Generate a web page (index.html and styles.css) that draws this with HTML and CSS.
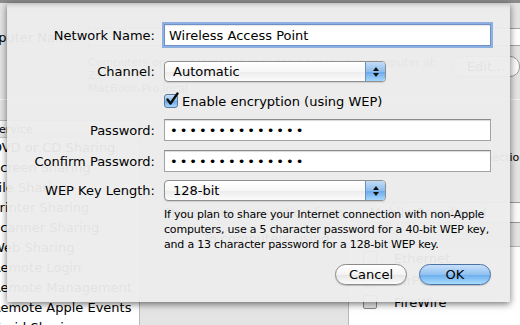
FILE: index.html
```html
<!DOCTYPE html>
<html lang="en">
<head>
    <meta charset="UTF-8">
    <title>Sharing - Wireless Access Point</title>
    <link rel="stylesheet" href="styles.css">
</head>
<body>
    <div class="window">
        <div class="toolbar-edge"></div>

        <div class="computer-name">
            <div class="name-row">
                <span class="name-label">Computer Name:</span>
                <span class="name-field"></span>
            </div>
            <div class="address-row">
                <p class="address">Computers on your local network can access your computer at: Zs-<br>MacBook-Pro.local</p>
                <span class="edit-btn">Edit…</span>
            </div>
        </div>
        <div class="separator"></div>

        <div class="panes">
            <div class="services">
                <div class="services-head">Service</div>
                <ul class="service-list">
                    <li>DVD or CD Sharing</li>
                    <li>Screen Sharing</li>
                    <li>File Sharing</li>
                    <li>Printer Sharing</li>
                    <li>Scanner Sharing</li>
                    <li>Web Sharing</li>
                    <li>Remote Login</li>
                    <li>Remote Management</li>
                    <li>Remote Apple Events</li>
                    <li>Xgrid Sharing</li>
                </ul>
            </div>
            <div class="detail">
                <p class="status">Internet Sharing: Off</p>
                <p class="desc">Internet Sharing allows other computers to share your connection to the</p>
                <div class="share-row">
                    <span>Share your connection from:</span>
                    <span class="ghost-popup">Mobile Broadband</span>
                </div>
                <p class="to-label">To computers using:</p>
                <ul class="ports">
                    <li><span class="port-box"></span>Ethernet</li>
                    <li><span class="port-box"></span>AirPort</li>
                    <li><span class="port-box"></span>FireWire</li>
                </ul>
            </div>
        </div>

        <!-- the sheet drops down over the preferences window -->
        <form class="sheet" onsubmit="return false;">
            <div class="row row-name">
                <label class="label" for="networkName">Network Name:</label>
                <input class="field focused" type="text" id="networkName" value="Wireless Access Point">
            </div>
            <div class="row row-channel">
                <label class="label" for="channel">Channel:</label>
                <div class="popup" id="channel">
                    <span class="popup-value">Automatic</span>
                    <span class="popup-arrows">
                        <svg width="8" height="12" viewBox="0 0 8 12"><path d="M4 1 L7 5 L1 5 Z M4 11 L7 7 L1 7 Z" fill="#111"/></svg>
                    </span>
                </div>
            </div>
            <div class="row row-check">
                <span class="label"></span>
                <label class="check">
                    <span class="checkbox">
                        <svg width="16" height="16" viewBox="0 0 16 16"><path d="M3.5 7.5 L6.5 11.5 L13.5 1.5" fill="none" stroke="#0d0d0d" stroke-width="2.4" stroke-linecap="round" stroke-linejoin="round"/></svg>
                    </span>
                    Enable encryption (using WEP)
                </label>
            </div>
            <div class="row row-pass">
                <label class="label" for="password">Password:</label>
                <input class="field dots" type="password" id="password" value="aaaaaaaaaaaaaa">
            </div>
            <div class="row row-confirm">
                <label class="label" for="confirm">Confirm Password:</label>
                <input class="field dots" type="password" id="confirm" value="aaaaaaaaaaaaaa">
            </div>
            <div class="row row-key">
                <label class="label" for="keyLength">WEP Key Length:</label>
                <div class="popup" id="keyLength">
                    <span class="popup-value">128-bit</span>
                    <span class="popup-arrows">
                        <svg width="8" height="12" viewBox="0 0 8 12"><path d="M4 1 L7 5 L1 5 Z M4 11 L7 7 L1 7 Z" fill="#111"/></svg>
                    </span>
                </div>
            </div>
            <p class="help">If you plan to share your Internet connection with non-Apple<br>computers, use a 5 character password for a 40-bit WEP key,<br>and a 13 character password for a 128-bit WEP key.</p>
            <div class="buttons">
                <button type="button" class="btn">Cancel</button>
                <button type="submit" class="btn btn-default">OK</button>
            </div>
        </form>
    </div>
</body>
</html>
```

FILE: styles.css
```css
* {
    box-sizing: border-box;
}
body {
    margin: 0;
    font-family: "DejaVu Sans", "Liberation Sans", sans-serif;
    font-size: 13px;
    color: #000;
}
p, ul {
    margin: 0;
    padding: 0;
    list-style: none;
}
.window {
    position: relative;
    width: 520px;
    height: 325px;
    overflow: hidden;
    background: #e4e4e4;
}
.toolbar-edge {
    height: 3px;
    background: #8c8c8c;
}

/* background window: computer name area */
.computer-name {
    height: 96px;
    padding-top: 25px;
}
.name-row {
    display: flex;
    align-items: center;
    height: 18px;
}
.name-label {
    margin-left: -45px;
    width: 125px;
    text-align: right;
    white-space: nowrap;
}
.name-field {
    flex: 1;
    margin-left: 8px;
    margin-right: -30px;
    height: 18px;
    background: #fff;
    border: 1px solid #a5a5a5;
}
.address-row {
    display: flex;
    align-items: flex-start;
    margin-top: 10px;
    padding-left: 88px;
}
.address {
    font-size: 11px;
    line-height: 13px;
    color: #333;
    width: 360px;
}
.edit-btn {
    margin-left: 6px;
    padding: 2px 14px;
    border: 1px solid #9a9a9a;
    border-radius: 10px;
    background: #fafafa;
}
.separator {
    height: 1px;
    background: #c4c4c4;
    border-bottom: 1px solid #f4f4f4;
}

/* background window: services and detail */
.panes {
    display: flex;
    margin-top: 20px;
}
.services {
    width: 148px;
    flex: none;
    margin-left: -8px;
    background: #fff;
    border-right: 1px solid #b8b8b8;
}
.services-head {
    height: 18px;
    line-height: 18px;
    font-size: 11px;
    border-top: 1px solid #b8b8b8;
    border-bottom: 1px solid #c8c8c8;
    background: linear-gradient(#fbfbfb, #e4e4e4);
}
.service-list li {
    height: 20px;
    line-height: 20px;
    white-space: nowrap;
}
.detail {
    flex: 1;
    padding-left: 23px;
}
.status {
    margin-top: 4px;
    font-weight: bold;
}
.desc {
    margin-top: 12px;
    font-size: 11px;
    white-space: nowrap;
}
.share-row {
    display: flex;
    align-items: center;
    margin-top: 38px;
    gap: 10px;
}
.ghost-popup {
    width: 165px;
    padding: 2px 10px;
    border: 1px solid #999;
    border-radius: 4px;
    background: #fafafa;
}
.to-label {
    margin-top: 8px;
    margin-left: 40px;
}
.ports {
    margin-left: 185px;
    background: #fff;
    border-left: 1px solid #b8b8b8;
    border-top: 1px solid #b8b8b8;
    height: 96px;
}
.ports li {
    display: flex;
    align-items: center;
    gap: 17px;
    height: 22px;
    padding-left: 14px;
}
.port-box {
    width: 14px;
    height: 14px;
    border: 1px solid #888;
    border-radius: 2px;
    background: linear-gradient(#fff, #e6e6e6);
}

/* the sheet */
.sheet {
    position: absolute;
    left: 7px;
    top: 3px;
    width: 503px;
    height: 299px;
    padding: 21px 19px 0 0;
    background: rgba(236, 236, 236, 0.955);
    box-shadow: 0 2px 7px rgba(0, 0, 0, 0.55), inset 0 5px 5px -4px rgba(0, 0, 0, 0.25);
}
.row {
    display: flex;
    align-items: center;
    gap: 9px;
}
.label {
    width: 148px;
    flex: none;
    text-align: right;
    white-space: nowrap;
}
.row-channel { margin-top: 15px; }
.row-check { margin-top: 11px; }
.row-pass { margin-top: 10px; }
.row-confirm { margin-top: 9px; }
.row-key { margin-top: 8px; }

.field {
    flex: 1;
    height: 22px;
    padding: 0 4px;
    font: inherit;
    color: #000;
    background: #fff;
    border: 1px solid #a3a3a3;
    border-top-color: #8a8a8a;
    border-radius: 0;
    box-shadow: inset 0 1px 1px rgba(0, 0, 0, 0.15);
    outline: none;
}
.field.focused {
    border-color: #6e92c8;
    box-shadow: 0 0 0 2px rgba(125, 165, 225, 0.85), inset 0 1px 1px rgba(0, 0, 0, 0.1);
}
.field.dots {
    letter-spacing: 2px;
    padding-left: 5px;
}

.popup {
    display: flex;
    align-items: stretch;
    width: 222px;
    height: 21px;
    border: 1px solid #8f8f8f;
    border-radius: 4px;
    overflow: hidden;
    background: linear-gradient(#ffffff, #f7f7f7 50%, #ececec 52%, #fbfbfb);
    box-shadow: 0 1px 1px rgba(0, 0, 0, 0.12);
}
.popup-value {
    flex: 1;
    padding-left: 8px;
    line-height: 19px;
}
.popup-arrows {
    width: 20px;
    display: flex;
    align-items: center;
    justify-content: center;
    border-left: 1px solid #6f8fb8;
    background: linear-gradient(#c3dcf7, #8fbdec 50%, #6aa8ea 52%, #a6d6fb);
}

.check {
    display: flex;
    align-items: center;
    gap: 4px;
    height: 16px;
}
.checkbox {
    position: relative;
    width: 14px;
    height: 14px;
    border: 1px solid #5a77a0;
    border-radius: 3px;
    background: linear-gradient(#c6def8, #8fbdec 50%, #6aa8ea 52%, #a8d6fb);
}
.checkbox svg {
    position: absolute;
    left: -1px;
    top: -3px;
}

.help {
    margin: 6px 0 0 157px;
    font-size: 11px;
    line-height: 15px;
    letter-spacing: -0.2px;
}

.buttons {
    display: flex;
    justify-content: flex-end;
    gap: 12px;
    margin-top: 12px;
}
.btn {
    width: 72px;
    height: 21px;
    padding: 0;
    font: inherit;
    color: #000;
    border: 1px solid #8a8a8a;
    border-radius: 11px;
    background: linear-gradient(#ffffff, #f4f4f4 50%, #e6e6e6 52%, #fbfbfb);
    box-shadow: 0 1px 1px rgba(0, 0, 0, 0.2);
}
.btn-default {
    border-color: #4b72a6;
    background: linear-gradient(#c8e0fa, #91c1f0 50%, #6badee 52%, #a9dcfd);
}
```
